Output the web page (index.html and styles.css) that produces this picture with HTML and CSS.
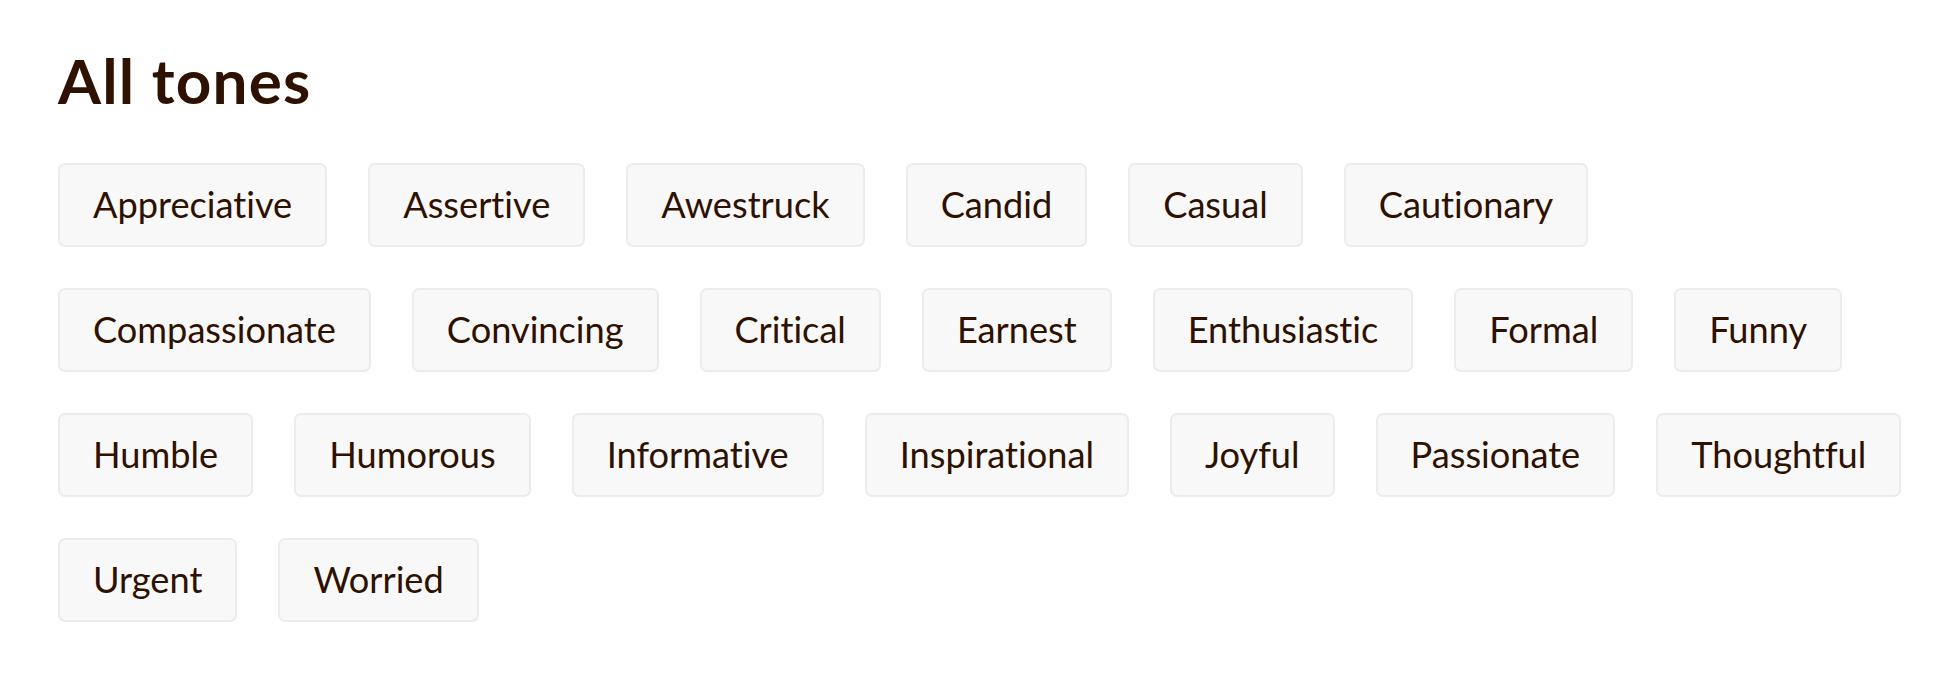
FILE: index.html
```html
<!DOCTYPE html>
<html lang="en">
<head>
    <meta charset="UTF-8">
    <meta name="viewport" content="width=device-width, initial-scale=1.0">
    <title>All tones</title>
    <link rel="stylesheet" href="styles.css">
</head>
<body>
    <section class="tones">
        <h1>All tones</h1>
        <ul class="tone-list">
            <li class="tone">Appreciative</li>
            <li class="tone">Assertive</li>
            <li class="tone">Awestruck</li>
            <li class="tone">Candid</li>
            <li class="tone">Casual</li>
            <li class="tone">Cautionary</li>
            <li class="tone">Compassionate</li>
            <li class="tone">Convincing</li>
            <li class="tone">Critical</li>
            <li class="tone">Earnest</li>
            <li class="tone">Enthusiastic</li>
            <li class="tone">Formal</li>
            <li class="tone">Funny</li>
            <li class="tone">Humble</li>
            <li class="tone">Humorous</li>
            <li class="tone">Informative</li>
            <li class="tone">Inspirational</li>
            <li class="tone">Joyful</li>
            <li class="tone">Passionate</li>
            <li class="tone">Thoughtful</li>
            <li class="tone">Urgent</li>
            <li class="tone">Worried</li>
        </ul>
    </section>
</body>
</html>
```
FILE: styles.css
```css
body {
    margin: 0;
    background-color: #ffffff;
    font-family: Lato, "Noto Sans", sans-serif;
    color: #2e1100;
}

.tones {
    padding: 44px 30px 0 58px;
}

h1 {
    margin: 0 0 47px 0;
    font-size: 62px;
    line-height: 72px;
    font-weight: 700;
    letter-spacing: 1.2px;
}

.tone-list {
    list-style: none;
    margin: 0;
    padding: 0;
    display: flex;
    flex-wrap: wrap;
    gap: 41px;
}

.tone {
    box-sizing: border-box;
    height: 84px;
    display: flex;
    align-items: center;
    padding: 0 33px 2px 33px;
    font-size: 36.2px;
    font-variant-ligatures: none;
    background-color: #f8f8f8;
    border: 2px solid #ececec;
    border-radius: 7px;
}
```
